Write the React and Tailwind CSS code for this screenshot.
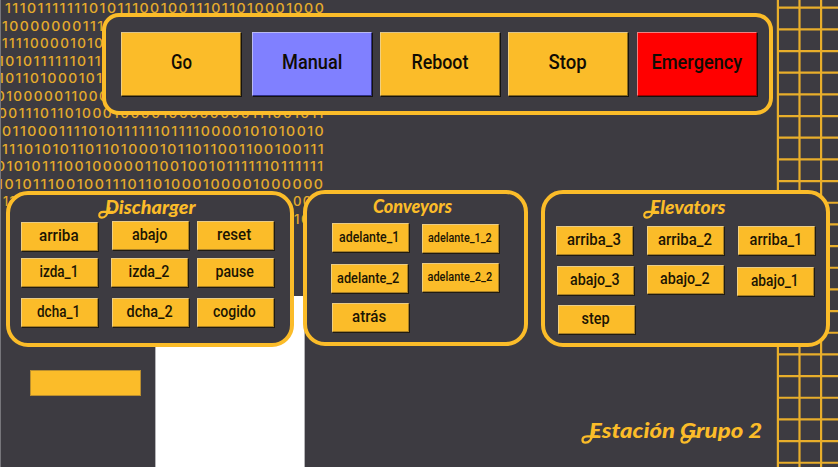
import { useLayoutEffect, useRef } from "react";

// Squeezes or stretches a line of text horizontally to a given width.
function Fit({ w, origin = "center", children }) {
  const ref = useRef(null);
  useLayoutEffect(() => {
    const el = ref.current;
    const fit = () => {
      el.style.transform = `scaleX(${w / el.offsetWidth})`;
    };
    fit();
    document.fonts.ready.then(fit);
  }, [w]);
  return (
    <span ref={ref} className="inline-block whitespace-nowrap" style={{ transformOrigin: origin }}>
      {children}
    </span>
  );
}

const tones = {
  amber: "bg-[#fbbc29] border-t-[#dcc48c] border-l-[#f0cf80] border-r-[#8a6a1d] border-b-[#8a6a1d]",
  violet: "bg-[#8080ff] border-t-[#b9b9f2] border-l-[#b9b9f2] border-r-[#30308a] border-b-[#30308a]",
  red: "bg-[#ff0000] border-t-[#f08080] border-l-[#f08080] border-r-[#a00000] border-b-[#a00000]",
};

function BigButton({ label, w, tone = "amber", cls = "" }) {
  return (
    <button
      className={`flex h-[64px] w-[120px] shrink-0 items-center justify-center border pb-[4px] text-[20px] leading-none font-medium text-[#100c04] shadow-[1px_1px_0_#15130f] ${tones[tone]} ${cls}`}
    >
      <Fit w={w}>{label}</Fit>
    </button>
  );
}

function SmallButton({ label, w, size = "text-[16px]", cls = "" }) {
  return (
    <button
      className={`flex h-[29px] w-[77px] items-center justify-center border border-t-[#e8cb86] border-l-[#f0cf80] border-r-[#a98025] border-b-[#a98025] bg-[#fbbc29] pr-[2px] pb-px leading-none font-medium text-[#1c1503] shadow-[1px_1px_0_#1f1b12] ${size} ${cls}`}
    >
      <Fit w={w}>{label}</Fit>
    </button>
  );
}

function Panel({ title, titleWidth, swash, cls, titleCls, gridCls, items }) {
  return (
    <section className={`shrink-0 rounded-[22px] border-4 border-[#fbbc29] bg-[#3d3b41] ${cls}`}>
      <h2 className={`relative flex h-[27px] font-['Lato',sans-serif] text-[18px] leading-[24px] font-black text-[#fbbc29] italic ${titleCls}`}>
        {swash && <Swash cls="-left-[7px] top-[12px] h-[12px] w-[16px]" />}
        <Fit w={titleWidth} origin="left">{title}</Fit>
      </h2>
      <div className={`grid ${gridCls}`}>
        {items.map((item) => (
          <SmallButton key={item.label} {...item} />
        ))}
      </div>
    </section>
  );
}

function Swash({ cls }) {
  return (
    <svg viewBox="0 0 15 11" className={`absolute ${cls}`} fill="none" stroke="#fbbc29" strokeWidth="2" strokeLinecap="round">
      <path d="M14 4.5H5C2 4.5 1 6.200 1.200 8C1.500 10.500 5.500 10.500 7.500 8C9 6 10 3.500 11 1" />
    </svg>
  );
}

const binaryRows = [
  { text: "1110111111101011100100111011010001000", x: "ml-[5px]", w: 320 },
  { text: "10000000111", x: "ml-[2px]", w: 103 },
  { text: "1111000010100", x: "ml-[2px]", w: 113 },
  { text: "1010111111011", x: "-ml-[2px]", w: 104 },
  { text: "1011010001011", x: "-ml-[2px]", w: 113 },
  { text: "0100000110001", x: "-ml-[4px]", w: 120 },
  { text: "001110110100010000100000000111001011", x: "-ml-[2px]", w: 327 },
  { text: "0110001111010111111011110000101010010", x: "ml-[2px]", w: 323 },
  { text: "1110101011011010001011011001100100111", x: "ml-[2px]", w: 323 },
  { text: "01010111001000001100100101111110111111", x: "-ml-[4px]", w: 329 },
  { text: "10101110010011101101000100001000000", x: "-ml-[3px]", w: 328 },
];

function Binary() {
  return (
    <div className="absolute inset-0 overflow-hidden font-['Inter',sans-serif] text-[12.5px] leading-[17.57px] font-medium tracking-[1.3px] text-[#e5ab2c]">
      {binaryRows.map((row) => (
        <div key={row.text} className={`h-[17.57px] ${row.x}`}>
          <Fit w={row.w} origin="left">{row.text}</Fit>
        </div>
      ))}
      <div className="flex h-[17.57px]">
        <div className="ml-[3px] w-[290px]">11</div>
        <Fit w={20} origin="left">00</Fit>
      </div>
      <div className="ml-[294px] h-[17.57px]">
        <Fit w={17} origin="left">10</Fit>
      </div>
    </div>
  );
}

function Lattice() {
  const rows = Array.from({ length: 22 }, (_, i) => 7.7 + i * 21.67);
  return (
    <svg className="absolute top-0 right-0 h-[467px] w-[62px]" viewBox="0 0 62 467" stroke="#e8ae2b" strokeWidth="2.2">
      {rows.map((y) => (
        <line key={y} x1="1" x2="62" y1={y} y2={y} />
      ))}
      {[1.9, 23.5, 45.1].map((x) => (
        <line key={x} x1={x} x2={x} y1="0" y2="467" />
      ))}
    </svg>
  );
}

const discharger = [
  { label: "arriba", w: 40, cls: "mt-px" },
  { label: "abajo", w: 35, cls: "ml-px" },
  { label: "reset", w: 34 },
  { label: "izda_1", w: 39 },
  { label: "izda_2", w: 41 },
  { label: "pause", w: 38 },
  { label: "dcha_1", w: 43 },
  { label: "dcha_2", w: 46, cls: "ml-px" },
  { label: "cogido", w: 43 },
];

const conveyors = [
  { label: "adelante_1", w: 60, size: "text-[14px]", cls: "ml-px" },
  { label: "adelante_1_2", w: 64, size: "text-[12.5px]", cls: "mt-px" },
  { label: "adelante_2", w: 62, size: "text-[14px]", cls: "mt-px" },
  { label: "adelante_2_2", w: 65, size: "text-[12.5px]" },
  { label: "atrás", w: 34, cls: "ml-px" },
];

const elevators = [
  { label: "arriba_3", w: 54 },
  { label: "arriba_2", w: 54 },
  { label: "arriba_1", w: 53, cls: "ml-px" },
  { label: "abajo_3", w: 50, cls: "ml-px mt-px" },
  { label: "abajo_2", w: 50 },
  { label: "abajo_1", w: 48, cls: "mt-[2px]" },
  { label: "step", w: 28, cls: "ml-[2px]" },
];

export default function App() {
  return (
    <div className="relative h-[467px] w-[838px] overflow-hidden bg-[#3d3b41] font-['Roboto',sans-serif]">
      <Binary />
      <Lattice />
      <div className="absolute top-[296px] left-[155px] h-[171px] w-[150px] border-x border-[#b5b5b8] bg-white" />
      <div className="absolute inset-y-0 left-0 w-px bg-[#77767b]" />

      <div className="relative flex h-full flex-col pt-[13px]">
        <header className="ml-[102px] flex h-[102px] w-[671px] shrink-0 rounded-[17px] border-4 border-[#fbbc29] bg-[#3d3b41] pt-[15px] pl-[15px]">
          <BigButton label="Go" w={21} />
          <BigButton label="Manual" w={60} tone="violet" cls="ml-[11px]" />
          <BigButton label="Reboot" w={57} cls="ml-[8px]" />
          <BigButton label="Stop" w={38} cls="ml-[8px]" />
          <BigButton label="Emergency" w={91} tone="red" cls="ml-[9px]" />
        </header>

        <main className="mt-[75px] flex h-[158px] shrink-0 items-start pl-[6px]">
          <Panel
            title="Discharger"
            titleWidth={91}
            swash
            cls="mt-px h-[156px] w-[288px]"
            titleCls="ml-[95px]"
            gridCls="ml-[11px] -mt-px grid-cols-[90px_86px_78px] grid-rows-[37px_40px_30px]"
            items={discharger}
          />
          <Panel
            title="Conveyors"
            titleWidth={79}
            cls="ml-[9px] h-[156px] w-[225px]"
            titleCls="ml-[66px]"
            gridCls="ml-[24px] mt-[2px] grid-cols-[91px_78px] grid-rows-[40px_40px_30px]"
            items={conveyors}
          />
          <Panel
            title="Elevators"
            titleWidth={75}
            swash
            cls="ml-[13px] h-[157px] w-[289px]"
            titleCls="ml-[105px] mt-px"
            gridCls="ml-[11px] mt-[4px] grid-cols-[91px_90px_79px] grid-rows-[39px_40px_30px]"
            items={elevators}
          />
        </main>

        <footer className="flex flex-1 items-start justify-between pt-[22px] pl-[30px]">
          <div className="h-[26px] w-[111px] border border-[#b98e30] bg-[#fbbc29]" />
          <div className="relative mt-[45px] mr-[76px] flex w-[173px] font-['Lato',sans-serif] text-[21px] leading-[30px] font-black text-[#fbbc29] italic">
            <Swash cls="-left-[8px] top-[16px] h-[13px] w-[18px]" />
            <Swash cls="left-[91px] top-[16px] h-[13px] w-[18px]" />
            <Fit w={173} origin="left">Estación Grupo 2</Fit>
          </div>
        </footer>
      </div>
    </div>
  );
}
